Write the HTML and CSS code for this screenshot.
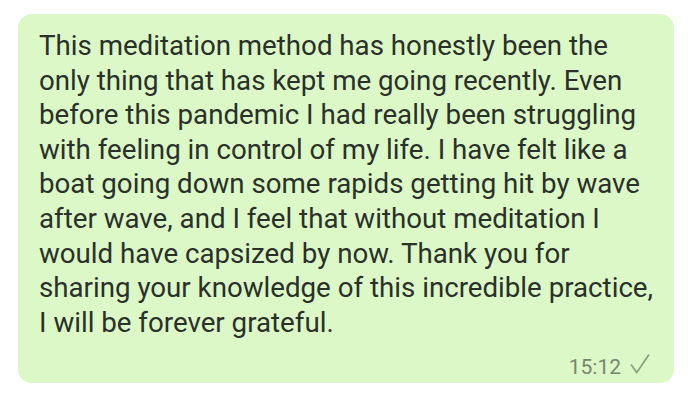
FILE: index.html
```html
<!DOCTYPE html>
<html lang="en">
<head>
    <meta charset="UTF-8">
    <title>Message</title>
    <link rel="stylesheet" href="styles.css">
</head>
<body>
    <div class="bubble">
        <p class="text">This meditation method has honestly been the only thing that has kept me going recently. Even before this pandemic I had really been struggling with feeling in control of my life. I have felt like a boat going down some rapids getting hit by wave after wave, and I feel that without meditation I would have capsized by now. Thank you for sharing your knowledge of this incredible practice, I will be forever grateful.</p>
        <div class="meta">
            <span class="time">15:12</span>
            <svg class="tick" width="20" height="21" viewBox="0 0 20 21">
                <path d="M1 11.5 L6.8 19.5 L19 1.5" fill="none" stroke="#86a080" stroke-width="1.7"/>
            </svg>
        </div>
    </div>
</body>
</html>
```

FILE: styles.css
```css
body {
    margin: 0;
    background: #ffffff;
    font-family: Roboto, "Liberation Sans", Arial, sans-serif;
}
.bubble {
    margin: 14px 0 0 18px;
    width: 656px;
    height: 369px;
    box-sizing: border-box;
    background: #dcf8c6;
    border-radius: 14px;
    padding: 15px 14px 0 21px;
    position: relative;
}
.text {
    margin: 0;
    font-size: 27.7px;
    line-height: 34.6px;
    color: #2a302a;
}
.meta {
    position: absolute;
    right: 24px;
    bottom: 4px;
    display: flex;
    align-items: flex-start;
    gap: 9px;
    line-height: 23px;
}
.time {
    font-size: 21px;
    color: #75876f;
}
.tick {
    margin-top: -3px;
}
```
